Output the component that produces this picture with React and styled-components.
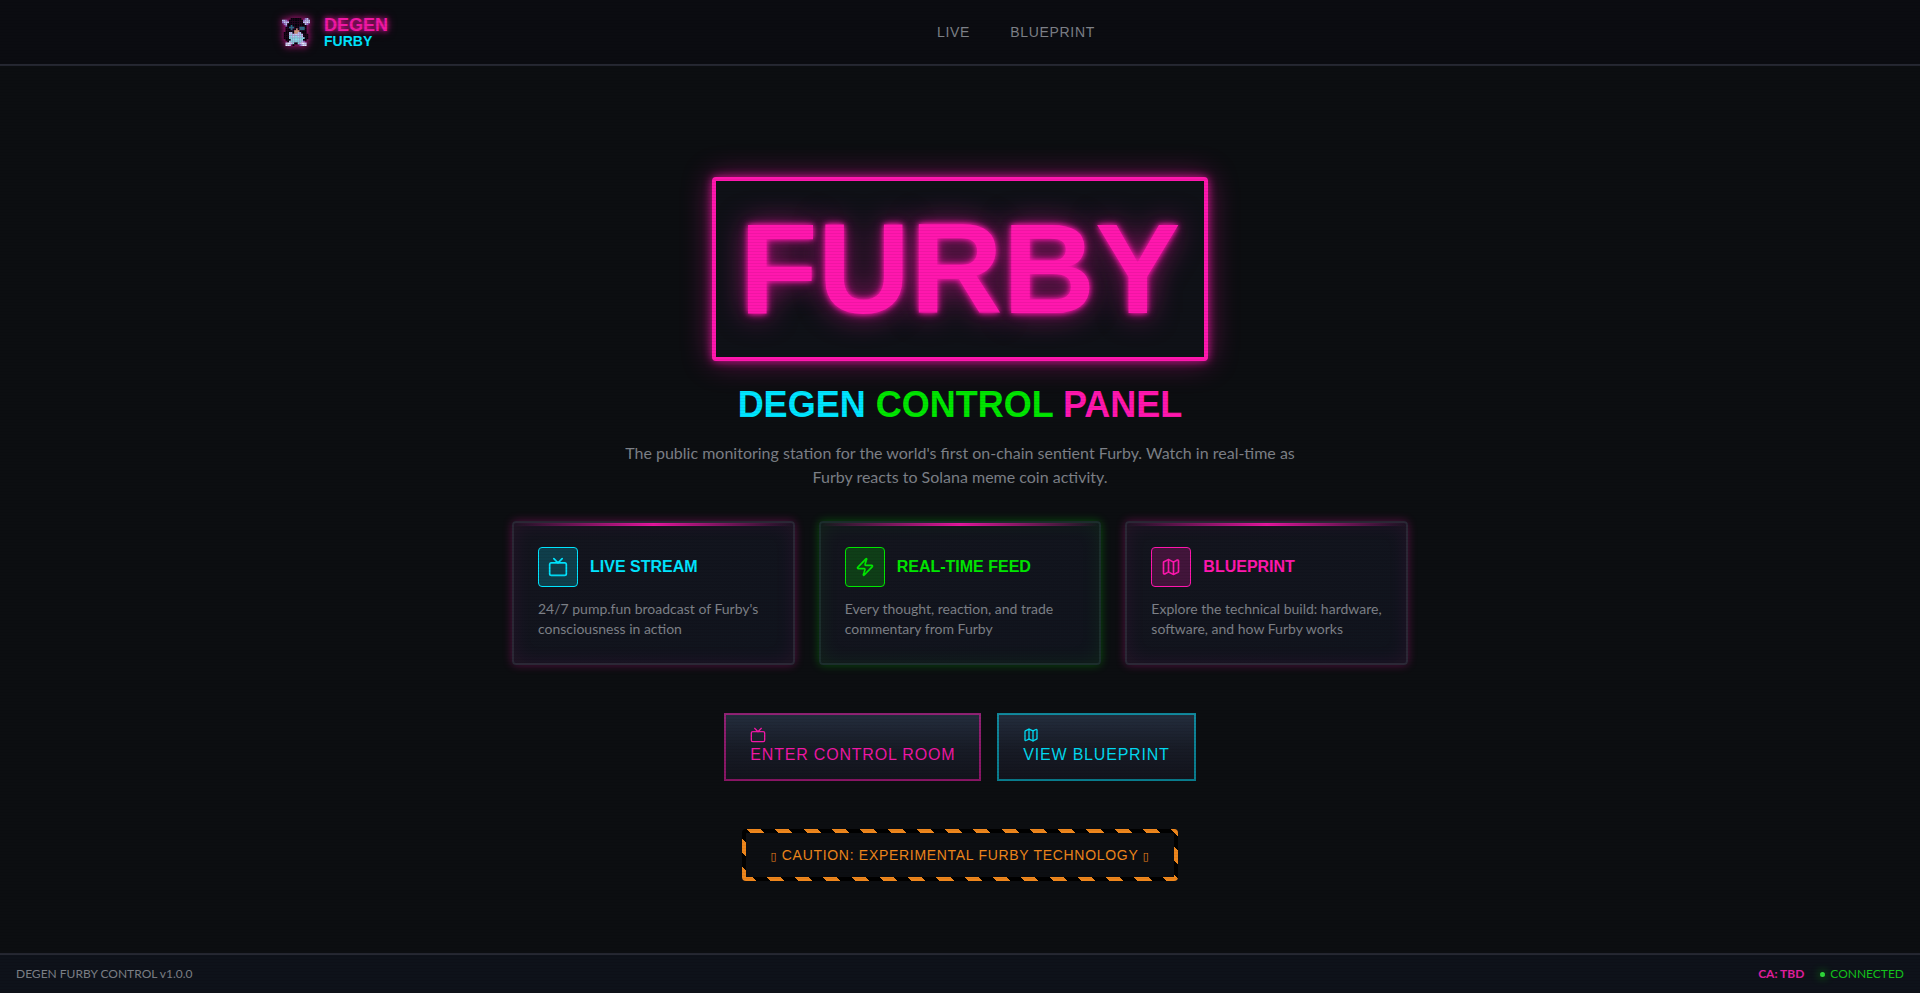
import React from 'react';
import styled, { createGlobalStyle } from 'styled-components';
import { Tv, Zap, Map as MapIcon } from 'lucide-react';

const colors = {
  pink: '#ff17ae',
  cyan: '#00e5ff',
  green: '#00e600',
  orange: '#ee861c',
  muted: '#7d8087',
  line: '#262832',
};

const glows = {
  pink: '255, 23, 174',
  cyan: '0, 229, 255',
  green: '0, 230, 0',
};

const features = [
  {
    title: 'LIVE STREAM',
    text: "24/7 pump.fun broadcast of Furby's consciousness in action",
    tone: 'cyan',
    glow: 'pink',
    Icon: Tv,
  },
  {
    title: 'REAL-TIME FEED',
    text: 'Every thought, reaction, and trade commentary from Furby',
    tone: 'green',
    glow: 'green',
    Icon: Zap,
  },
  {
    title: 'BLUEPRINT',
    text: 'Explore the technical build: hardware, software, and how Furby works',
    tone: 'pink',
    glow: 'pink',
    Icon: MapIcon,
  },
];

// one letter for each pixel of the mascot
const furbyPixels = [
  '.....kkkkkk..vl.',
  'llv.kkkkkkkkvlll',
  'vlllkkkkkkkkllwl',
  '.vlkkkkkkkkkklv.',
  '..vkktkkkkkkkk..',
  '..kktttkkktttk..',
  '..kkktkkoktttk..',
  '..kkkkkoookkkk..',
  '.kkkllkoollkkk..',
  '.kkklcllllclkkk.',
  '.kkkcclcclclkkk.',
  '.kkkccccccccckk.',
  '..kkkccccccckk..',
  '...klcccccclv...',
  '..lwwlckkclwwl..',
  '..wwl.k...vlww..',
];

const pixelColors = {
  k: '#03040a',
  w: '#dfe6ff',
  l: '#b9c4f2',
  v: '#8f6cc8',
  c: '#86dbe6',
  t: '#1f7484',
  o: '#c99a78',
};

function FurbyLogo() {
  return (
    <LogoArt viewBox="0 0 16 16" preserveAspectRatio="none" aria-hidden="true">
      {furbyPixels.map((row, y) =>
        row
          .split('')
          .map((p, x) =>
            p === '.' ? null : (
              <rect
                key={`${x}-${y}`}
                x={x}
                y={y}
                width="1.05"
                height="1.05"
                fill={pixelColors[p]}
              />
            )
          )
      )}
    </LogoArt>
  );
}

export default function App() {
  return (
    <Page>
      <GlobalStyle />
      <Header>
        <HeaderInner>
          <Brand href="#">
            <FurbyLogo />
            <BrandText>
              <BrandTop>DEGEN</BrandTop>
              <BrandBottom>FURBY</BrandBottom>
            </BrandText>
          </Brand>
          <Nav>
            <NavLink href="#live">LIVE</NavLink>
            <NavLink href="#blueprint">BLUEPRINT</NavLink>
          </Nav>
          <HeaderEnd />
        </HeaderInner>
      </Header>

      <Main>
        <Sign>FURBY</Sign>
        <Title>
          <Word $tone="cyan">DEGEN</Word> <Word $tone="green">CONTROL</Word>{' '}
          <Word $tone="pink">PANEL</Word>
        </Title>
        <Intro>
          The public monitoring station for the world's first on-chain sentient
          Furby. Watch in real-time as Furby reacts to Solana meme coin
          activity.
        </Intro>

        <Cards>
          {features.map(({ title, text, tone, glow, Icon }) => (
            <Card key={title} $glow={glow}>
              <CardHead>
                <IconBox $tone={tone}>
                  <Icon size={20} />
                </IconBox>
                <CardTitle $tone={tone}>{title}</CardTitle>
              </CardHead>
              <CardText>{text}</CardText>
            </Card>
          ))}
        </Cards>

        <Actions>
          <ActionButton type="button" $tone="pink">
            <Tv size={16} />
            ENTER CONTROL ROOM
          </ActionButton>
          <ActionButton type="button" $tone="cyan">
            <MapIcon size={16} />
            VIEW BLUEPRINT
          </ActionButton>
        </Actions>

        <Caution>
          <Mark>▯</Mark> CAUTION: EXPERIMENTAL FURBY TECHNOLOGY <Mark>▯</Mark>
        </Caution>
      </Main>

      <Footer>
        <span>DEGEN FURBY CONTROL v1.0.0</span>
        <FooterRight>
          <Contract>CA: TBD</Contract>
          <Status>
            <Dot />
            CONNECTED
          </Status>
        </FooterRight>
      </Footer>
      <Scanlines />
    </Page>
  );
}

const GlobalStyle = createGlobalStyle`
  *,
  *::before,
  *::after {
    box-sizing: border-box;
  }

  body {
    margin: 0;
    background: #0c0e11;
    color: ${colors.muted};
    font-family: Lato, sans-serif;
    font-size: 16px;
    line-height: 24px;
  }

  h1, h2, h3, p {
    margin: 0;
  }
`;

const Page = styled.div`
  display: flex;
  flex-direction: column;
  min-height: 100vh;
`;

const Scanlines = styled.div`
  position: fixed;
  inset: 0;
  pointer-events: none;
  background: repeating-linear-gradient(
    0deg,
    rgba(0, 0, 0, 0.06),
    rgba(0, 0, 0, 0.06) 1px,
    transparent 1px,
    transparent 3px
  );
`;

const Header = styled.header`
  border-bottom: 2px solid ${colors.line};
  background: #0b0c11;
`;

const HeaderInner = styled.div`
  display: flex;
  align-items: center;
  justify-content: space-between;
  max-width: 1400px;
  height: 64px;
  margin: 0 auto;
  padding: 0 20px;
`;

const HeaderEnd = styled.div`
  width: 0;
`;

const Brand = styled.a`
  display: flex;
  align-items: center;
  gap: 12px;
  padding-right: 4px;
  text-decoration: none;
`;

const LogoArt = styled.svg`
  width: 32px;
  height: 32px;
  padding: 2px;
  filter: drop-shadow(0 0 3px rgba(${glows.pink}, 0.5))
    drop-shadow(0 0 4px rgba(${glows.pink}, 0.5));
`;

const BrandText = styled.span`
  display: flex;
  flex-direction: column;
  font-family: 'Liberation Sans', sans-serif;
  font-weight: 700;
`;

const BrandTop = styled.span`
  font-size: 18px;
  line-height: 18px;
  color: #f018a4;
  text-shadow: 0 0 5px rgba(${glows.pink}, 0.8), 0 0 10px rgba(${glows.pink}, 0.6);
`;

const BrandBottom = styled.span`
  font-size: 14px;
  line-height: 14px;
  color: ${colors.cyan};
`;

const Nav = styled.nav`
  display: flex;
  gap: 8px;
`;

const NavLink = styled.a`
  padding: 8px 16px;
  font-family: 'Liberation Sans', sans-serif;
  font-size: 14px;
  line-height: 20px;
  letter-spacing: 0.05em;
  color: ${colors.muted};
  text-decoration: none;
`;

const Main = styled.main`
  display: flex;
  flex: 1;
  flex-direction: column;
  align-items: center;
  justify-content: center;
  padding: 38px 16px 0;
`;

const Sign = styled.h1`
  padding: 24px;
  border: 4px solid ${colors.pink};
  border-radius: 4px;
  background: #0f1117;
  font-family: 'Liberation Sans', sans-serif;
  font-size: 128px;
  font-weight: 700;
  line-height: 128px;
  color: ${colors.pink};
  text-shadow: 0 0 5px ${colors.pink}, 0 0 10px rgba(${glows.pink}, 0.8),
    0 0 30px rgba(${glows.pink}, 0.6);
  box-shadow: 0 0 10px rgba(${glows.pink}, 0.8),
    0 0 30px rgba(${glows.pink}, 0.4);
`;

const Title = styled.h2`
  margin-top: 24px;
  font-family: 'Liberation Sans', sans-serif;
  font-size: 36px;
  font-weight: 700;
  line-height: 40px;
  text-align: center;
`;

const Word = styled.span`
  color: ${({ $tone }) => colors[$tone]};
`;

const Intro = styled.p`
  max-width: 672px;
  margin-top: 16px;
  text-align: center;
`;

const Cards = styled.div`
  display: grid;
  grid-template-columns: repeat(3, 1fr);
  gap: 24px;
  width: 100%;
  max-width: 896px;
  margin-top: 32px;
`;

const Card = styled.article`
  position: relative;
  padding: 24px;
  border: 2px solid ${({ $glow }) => ($glow === 'green' ? '#1c2e2d' : '#2b2836')};
  border-radius: 4px;
  background: linear-gradient(145deg, #14151e, #10141d);
  box-shadow: 0 0 10px rgba(${({ $glow }) => glows[$glow]}, 0.3),
    inset 0 0 20px rgba(${({ $glow }) => glows[$glow]}, 0.08);

  &::before {
    content: '';
    position: absolute;
    top: 0;
    right: 0;
    left: 0;
    height: 3px;
    background: linear-gradient(90deg, transparent, ${colors.pink}, transparent);
    opacity: 0.9;
  }
`;

const CardHead = styled.div`
  display: flex;
  align-items: center;
  gap: 12px;
`;

const IconBox = styled.span`
  display: flex;
  align-items: center;
  justify-content: center;
  width: 40px;
  height: 40px;
  border: 1px solid ${({ $tone }) => colors[$tone]};
  border-radius: 4px;
  background: rgba(${({ $tone }) => glows[$tone]}, 0.2);
  color: ${({ $tone }) => colors[$tone]};
`;

const CardTitle = styled.h3`
  font-family: 'Liberation Sans', sans-serif;
  font-size: 16px;
  font-weight: 700;
  line-height: 24px;
  color: ${({ $tone }) => colors[$tone]};
`;

const CardText = styled.p`
  margin-top: 12px;
  font-size: 14px;
  line-height: 20px;
`;

const Actions = styled.div`
  display: flex;
  gap: 16px;
  margin-top: 48px;
`;

const ActionButton = styled.button`
  padding: 12px 24px;
  border: 2px solid rgba(${({ $tone }) => glows[$tone]}, 0.5);
  background: linear-gradient(180deg, #242e3e, #181c27 50%, #12131b);
  background-origin: border-box;
  font-family: 'Liberation Sans', sans-serif;
  font-size: 16px;
  line-height: 24px;
  letter-spacing: 0.05em;
  text-align: left;
  color: rgba(${({ $tone }) => glows[$tone]}, 0.94);
  cursor: pointer;

  svg {
    display: block;
  }
`;

const Caution = styled.div`
  margin-top: 48px;
  padding: 12px 24px;
  border: 4px solid transparent;
  border-radius: 4px;
  background: linear-gradient(#0c0e12, #0c0e12) padding-box,
    repeating-linear-gradient(
        45deg,
        ${colors.orange},
        ${colors.orange} 10px,
        #000 10px,
        #000 20px
      )
      border-box;
  font-family: 'Liberation Sans', sans-serif;
  font-size: 14px;
  line-height: 20px;
  letter-spacing: 0.05em;
  color: ${colors.orange};
`;

const Mark = styled.span`
  font-family: 'DejaVu Sans', sans-serif;
  font-size: 11px;
  line-height: 11px;
`;

const Footer = styled.footer`
  display: flex;
  align-items: center;
  justify-content: space-between;
  height: 40px;
  padding: 0 16px;
  border-top: 2px solid ${colors.line};
  background: #0e121a;
  font-size: 12px;
  line-height: 16px;
`;

const FooterRight = styled.div`
  display: flex;
  align-items: center;
  gap: 16px;
`;

const Contract = styled.span`
  font-weight: 700;
  color: #e01e9e;
`;

const Status = styled.span`
  display: flex;
  align-items: center;
  gap: 5px;
  color: #14c41c;
`;

const Dot = styled.span`
  width: 5px;
  height: 5px;
  border-radius: 50%;
  background: #2fd83a;
  box-shadow: 0 0 8px rgba(${glows.green}, 0.8);
`;
